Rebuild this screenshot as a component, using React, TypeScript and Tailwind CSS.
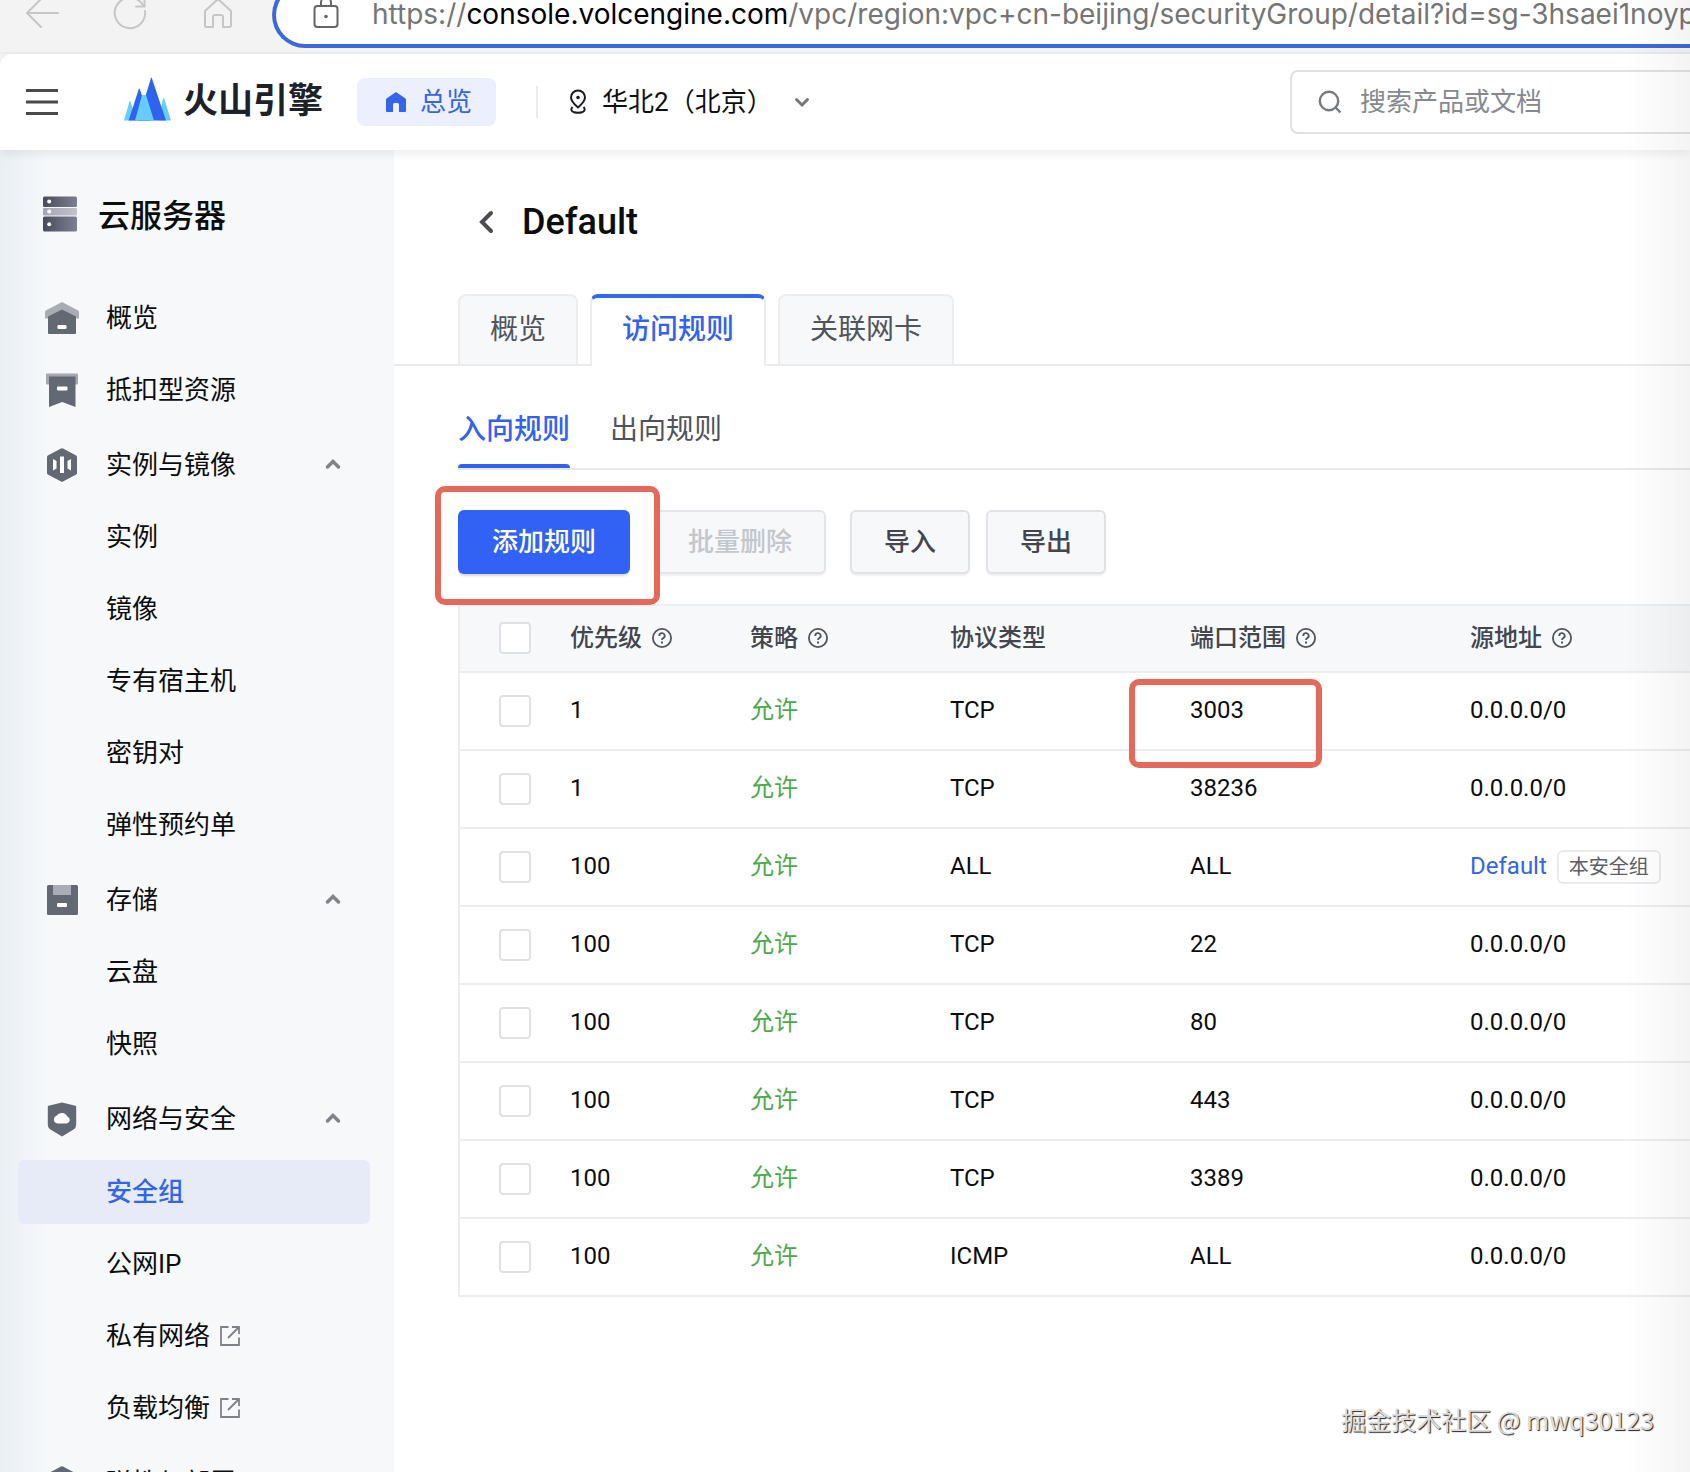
import React from "react";

const BackIcon = () => (
  <svg width="36" height="36" viewBox="0 0 36 36" fill="none" stroke="#c6c6c6" strokeWidth="2" strokeLinecap="round">
    <path d="M34 16H3M17 30L3 16L17 2" />
  </svg>
);

const ReloadIcon = () => (
  <svg width="36" height="36" viewBox="0 0 36 36" fill="none" stroke="#c6c6c6" strokeWidth="2" strokeLinecap="round">
    <path d="M33 14A15.2 15.2 0 1 1 29 5.500L32 9.500M32.500 1V9.500H24" />
  </svg>
);

const BrowserHomeIcon = () => (
  <svg width="36" height="36" viewBox="0 0 36 36" fill="none" stroke="#c6c6c6" strokeWidth="2" strokeLinejoin="round">
    <path d="M5 14L18 2L31 14V28.500A1.500 1.500 0 0 1 29.500 30H23V20A2 2 0 0 0 21 18H15A2 2 0 0 0 13 20V30H6.500A1.500 1.500 0 0 1 5 28.500Z" />
  </svg>
);

const LockIcon = () => (
  <svg width="28" height="36" viewBox="0 0 28 36" fill="none" stroke="#666" strokeWidth="2">
    <rect x="2.500" y="9" width="23" height="21" rx="3" />
    <path d="M9 9V5.500A5 5 0 0 1 19 5.500V9" />
    <circle cx="14" cy="19.500" r="1.800" fill="#666" stroke="none" />
  </svg>
);

const MenuIcon = () => (
  <svg width="32" height="28" viewBox="0 0 32 28" fill="none" stroke="#4a4a4a" strokeWidth="3">
    <path d="M0 2.500H32M0 14H32M0 25.500H32" />
  </svg>
);

const VolcanoLogo = () => (
  <svg width="47" height="50" viewBox="0 0 47 50">
    <path d="M0 43.500L5.500 24.500Q6 23.500 6.500 24.500L12 43.500Z" fill="#64cdfb" />
    <path d="M35 43.500L39 21.500Q39.600 20.500 40.200 21.500L47 43.500Z" fill="#64cdfb" />
    <path d="M4.600 43.500L14.800 12Q15.300 11 15.800 12L26 43.500Z" fill="#2f63ef" />
    <path d="M14 43.500L27 1Q27.400 0 27.800 1L42 43.500Z" fill="#2f63ef" />
    <path d="M11 43.500L18 18H22L30 43.500Z" fill="#64cdfb" />
  </svg>
);

const HomeSolidIcon = () => (
  <svg width="22" height="22" viewBox="0 0 22 22">
    <path d="M11 1L20.500 7.500Q21 8 21 9V20A1 1 0 0 1 20 21H14V13.500A1.500 1.500 0 0 0 12.500 12H9.500A1.500 1.500 0 0 0 8 13.500V21H2A1 1 0 0 1 1 20V9Q1 8 1.500 7.500Z" fill="#3564ec" />
  </svg>
);

const PinIcon = () => (
  <svg width="18" height="26" viewBox="0 0 18 26" fill="none" stroke="#1b1c20" strokeWidth="2">
    <path d="M9 18.500C5 15 2 12 2 8.500A7 7 0 0 1 16 8.500C16 12 13 15 9 18.500Z" />
    <circle cx="9" cy="8.500" r="1.800" fill="#1b1c20" stroke="none" />
    <path d="M3.500 18C1.500 20 2 22.500 5 23.300Q9 24.300 13 23.300C16 22.500 16.500 20 14.500 18" />
  </svg>
);

const ChevronDown = () => (
  <svg width="18" height="18" viewBox="0 0 18 18" fill="none" stroke="#73777c" strokeWidth="3" strokeLinecap="round">
    <path d="M3.500 6.500L9 12L14.500 6.500" />
  </svg>
);

const ChevronUp = () => (
  <svg width="20" height="20" viewBox="0 0 20 20" fill="none" stroke="#808388" strokeWidth="3.500" strokeLinecap="round">
    <path d="M4.500 12L10 6.500L15.500 12" />
  </svg>
);

const ChevronLeft = () => (
  <svg width="18" height="26" viewBox="0 0 18 26" fill="none" stroke="#4a4c50" strokeWidth="4" strokeLinecap="round">
    <path d="M14 4L5 13L14 22" />
  </svg>
);

const SearchIcon = () => (
  <svg width="24" height="24" viewBox="0 0 24 24" fill="none" stroke="#76797e" strokeWidth="2.400">
    <circle cx="11" cy="11" r="9.200" />
    <path d="M17.500 17.500L22.500 22.500" />
  </svg>
);

const HelpIcon = () => (
  <svg width="22" height="22" viewBox="0 0 22 22" fill="none" stroke="#50545b" strokeWidth="1.800">
    <circle cx="11" cy="11" r="9.100" />
    <path d="M8.300 9A2.700 2.700 0 1 1 12 11.300Q11 11.800 11 13" />
    <path d="M11 14.600V16.400" strokeWidth="2" />
  </svg>
);

const ExternalIcon = () => (
  <svg width="20" height="20" viewBox="0 0 20 20" fill="none" stroke="#7e8288" strokeWidth="1.800">
    <path d="M8.500 1H1V19H19V11.500M8 12L19 1M12 1H19V8" />
  </svg>
);

const ServerIcon = () => (
  <svg width="34" height="40" viewBox="0 0 34 40">
    <defs>
      <linearGradient id="serverDark" x1="0" x2="1" y1="0" y2="0">
        <stop offset="0" stopColor="#474c5b" />
        <stop offset="1" stopColor="#7d8090" />
      </linearGradient>
      <linearGradient id="serverLight" x1="0" x2="1" y1="0" y2="0">
        <stop offset="0" stopColor="#a3a7b3" />
        <stop offset="1" stopColor="#c0c3cc" />
      </linearGradient>
    </defs>
    <rect x="0" y="0.500" width="34" height="10.500" rx="1.500" fill="url(#serverDark)" />
    <rect x="0" y="12" width="34" height="7.500" rx="1" fill="url(#serverLight)" />
    <rect x="0" y="20.500" width="34" height="15" rx="1.500" fill="url(#serverDark)" />
    <circle cx="6.200" cy="5.500" r="2" fill="#fff" />
    <circle cx="6.200" cy="15.500" r="2" fill="#fff" />
    <circle cx="6.200" cy="28.200" r="2" fill="#fff" />
  </svg>
);

const OverviewIcon = () => (
  <svg width="36" height="36" viewBox="0 0 36 36">
    <path d="M18 2L34.200 10.500Q35 11 35 12V18.500H1V12Q1 11 1.800 10.500Z" fill="#a9adb3" />
    <path d="M4 16.500L18 9.500L32 16.500V33A1 1 0 0 1 31 34H5A1 1 0 0 1 4 33Z" fill="#636973" />
    <rect x="13.500" y="25" width="9" height="4" rx="1" fill="#fff" />
  </svg>
);

const BookmarkIcon = () => (
  <svg width="36" height="36" viewBox="0 0 36 36">
    <rect x="2" y="1.500" width="32" height="11" rx="1" fill="#a4a8ae" />
    <path d="M5 4.500H31.500V35L18.200 30L5 35Z" fill="#636973" />
    <rect x="13" y="14.500" width="10.500" height="4" rx="1" fill="#fff" />
  </svg>
);

const HexagonIcon = () => (
  <svg width="36" height="36" viewBox="0 0 36 36">
    <path d="M17 1.600Q18 1 19 1.600L32.200 8.500Q33 9 33 10V26Q33 27 32.200 27.500L19 34.500Q18 35 17 34.500L3.800 27.500Q3 27 3 26V10Q3 9 3.800 8.500Z" fill="#636973" />
    <path d="M16 9.500H20V26H16ZM9 12L12.500 14V21.500L9 23.500ZM27 12L23.500 14V21.500L27 23.500Z" fill="#fff" />
  </svg>
);

const DiskIcon = () => (
  <svg width="36" height="36" viewBox="0 0 36 36">
    <rect x="3" y="3" width="31" height="30" rx="1.500" fill="#636973" />
    <rect x="9" y="3" width="18" height="10" fill="#a9adb5" />
    <rect x="13" y="21" width="10" height="4" rx="1" fill="#fff" />
  </svg>
);

const ShieldIcon = () => (
  <svg width="36" height="36" viewBox="0 0 36 36">
    <path d="M18 1.500L31.500 4.800Q32.200 5 32.200 5.800V24Q32 27 29.500 28.500L18 35.500L6.500 28.500Q4 27 3.800 24V5.800Q3.800 5 4.500 4.800Z" fill="#636973" />
    <path d="M13.500 22.500A4 4 0 0 1 12.500 14.800A6.200 6.200 0 0 1 23.500 15.800A3.500 3.500 0 0 1 23 22.500Z" fill="#fff" />
  </svg>
);

type Entry = {
  label: string;
  icon?: React.ReactNode;
  group?: boolean;
  active?: boolean;
  external?: boolean;
};

const entries: Entry[] = [
  { label: "概览", icon: <OverviewIcon /> },
  { label: "抵扣型资源", icon: <BookmarkIcon /> },
  { label: "实例与镜像", icon: <HexagonIcon />, group: true },
  { label: "实例" },
  { label: "镜像" },
  { label: "专有宿主机" },
  { label: "密钥对" },
  { label: "弹性预约单" },
  { label: "存储", icon: <DiskIcon />, group: true },
  { label: "云盘" },
  { label: "快照" },
  { label: "网络与安全", icon: <ShieldIcon />, group: true },
  { label: "安全组", active: true },
  { label: "公网IP" },
  { label: "私有网络", external: true },
  { label: "负载均衡", external: true },
  { label: "弹性与部署", icon: <HexagonIcon />, group: true },
];

function NavEntry({ entry }: { entry: Entry }) {
  if (entry.group) {
    return (
      <button type="button" aria-expanded="true" className="mt-[3px] mb-2 flex h-16 w-full shrink-0 items-center gap-[26px] pr-[27px] pl-[26px] text-left">
        {entry.icon}
        <span className="flex-1">{entry.label}</span>
        <ChevronUp />
      </button>
    );
  }
  if (entry.icon) {
    return (
      <a href="#" className="mb-2 flex h-16 shrink-0 items-center gap-[26px] pl-[26px]">
        {entry.icon}
        {entry.label}
      </a>
    );
  }
  return (
    <a
      href="#"
      className={
        entry.active
          ? "mt-px mb-2 flex h-16 shrink-0 items-center rounded-md bg-[#e7ebf7] pl-[88px] font-medium text-[#3564ec]"
          : "mb-2 flex h-16 shrink-0 items-center gap-[10px] pl-[88px]"
      }
    >
      {entry.label}
      {entry.external && <ExternalIcon />}
    </a>
  );
}

function Checkbox({ label }: { label: string }) {
  return (
    <input
      type="checkbox"
      aria-label={label}
      className="block size-8 appearance-none rounded-sm border-2 border-[#dfe1e5] bg-white checked:bg-[#3162f5]"
    />
  );
}

const columns = [
  { label: "优先级", help: true },
  { label: "策略", help: true },
  { label: "协议类型", help: false },
  { label: "端口范围", help: true },
  { label: "源地址", help: true },
];

const rules = [
  { priority: "1", protocol: "TCP", port: "3003", source: "0.0.0.0/0", marked: true },
  { priority: "1", protocol: "TCP", port: "38236", source: "0.0.0.0/0" },
  { priority: "100", protocol: "ALL", port: "ALL", source: "Default", own: true },
  { priority: "100", protocol: "TCP", port: "22", source: "0.0.0.0/0" },
  { priority: "100", protocol: "TCP", port: "80", source: "0.0.0.0/0" },
  { priority: "100", protocol: "TCP", port: "443", source: "0.0.0.0/0" },
  { priority: "100", protocol: "TCP", port: "3389", source: "0.0.0.0/0" },
  { priority: "100", protocol: "ICMP", port: "ALL", source: "0.0.0.0/0" },
];

function BrowserBar() {
  return (
    <div className="flex h-[54px] shrink-0 items-end overflow-hidden border-b-2 border-[#ececec] bg-[#f3f3f3] pb-1">
      <div className="flex h-[66px] w-[272px] shrink-0 items-center gap-[52px] pl-6">
        <button type="button" aria-label="后退"><BackIcon /></button>
        <button type="button" aria-label="刷新"><ReloadIcon /></button>
        <button type="button" aria-label="主页"><BrowserHomeIcon /></button>
      </div>
      <div className="flex h-[66px] min-w-0 flex-1 items-center gap-8 overflow-hidden rounded-l-full border-4 border-r-0 border-[#3b69dd] bg-white pl-9">
        <span className="shrink-0"><LockIcon /></span>
        <span className="pb-0.5 font-['Inter','Noto_Sans_CJK_SC',sans-serif] text-[28px] whitespace-nowrap text-[#757575]">
          https://<span className="text-black">console.volcengine.com</span>
          /vpc/region:vpc+cn-beijing/securityGroup/detail?id=sg-3hsaei1noypk
        </span>
      </div>
    </div>
  );
}

function TopBar() {
  return (
    <div className="shrink-0 bg-[#f3f3f3]">
      <header className="relative z-10 flex h-24 items-center rounded-tl-xl bg-white pl-[26px] shadow-[0_4px_10px_rgba(0,0,0,0.07)]">
        <button type="button" aria-label="菜单" className="mr-[66px]"><MenuIcon /></button>
        <a href="#" className="mr-[34px] flex items-center gap-3">
          <VolcanoLogo />
          <span className="pb-0.5 text-[35px] leading-none font-bold text-[#1d2129]">火山引擎</span>
        </a>
        <a href="#" className="mr-10 flex h-12 items-center gap-[13px] rounded-lg bg-[#eceffd] px-7 pr-6 text-[26px] text-[#3564ec]">
          <HomeSolidIcon />
          总览
        </a>
        <span className="mr-[31px] h-8 w-0.5 bg-[#ebebeb]" />
        <button type="button" className="flex items-center text-[26px] text-[#0e0f12]">
          <PinIcon />
          <span className="mr-5 ml-[15px]">华北2（北京）</span>
          <ChevronDown />
        </button>
        <label className="ml-auto flex h-16 w-[400px] items-center gap-[18px] rounded-l-lg border-2 border-r-0 border-[#e0e1e2] pl-[26px]">
          <SearchIcon />
          <input
            type="text"
            aria-label="搜索"
            placeholder="搜索产品或文档"
            className="min-w-0 flex-1 bg-transparent text-[26px] outline-none placeholder:text-[#86898e]"
          />
        </label>
      </header>
    </div>
  );
}

function Sidebar() {
  return (
    <aside className="flex w-[394px] shrink-0 flex-col overflow-hidden bg-[#f6f8fa] bg-[linear-gradient(to_right,#eaeff4,#f6f8fa_48px)] pt-[42px] pr-6 pl-[18px] text-[26px] text-[#0c0d0e]">
      <div className="mb-[46px] flex h-12 shrink-0 items-center gap-[21px] pl-[25px] text-[32px] font-medium">
        <ServerIcon />
        云服务器
      </div>
      <nav className="flex flex-col">
        {entries.map((entry) => (
          <NavEntry key={entry.label} entry={entry} />
        ))}
      </nav>
    </aside>
  );
}

function RuleTable() {
  return (
    <div className="mt-[30px] border-t-2 border-l-2 border-[#ebedef]">
      <table className="w-full table-fixed border-separate border-spacing-0 text-left text-2xl text-[#0c0d0e]">
        <colgroup>
          <col className="w-[94px]" />
          <col className="w-[180px]" />
          <col className="w-[200px]" />
          <col className="w-[240px]" />
          <col className="w-[280px]" />
          <col />
        </colgroup>
        <thead>
          <tr className="h-[67px] bg-[#f6f8fa]">
            <th className="border-b-2 border-[#ebedef] pb-0.5 pl-[39px]"><Checkbox label="全选" /></th>
            {columns.map((column) => (
              <th key={column.label} scope="col" className="border-b-2 border-[#ebedef] pb-0.5 pl-4 font-medium text-[#42464e]">
                <span className="flex items-center gap-[9px]">
                  {column.label}
                  {column.help && <HelpIcon />}
                </span>
              </th>
            ))}
          </tr>
        </thead>
        <tbody>
          {rules.map((rule, index) => (
            <tr key={index} className="h-[78px]">
              <td className="border-b-2 border-[#ebedef] pl-[39px]"><Checkbox label={`规则 ${index + 1}`} /></td>
              <td className="border-b-2 border-[#ebedef] pb-0.5 pl-4">{rule.priority}</td>
              <td className="border-b-2 border-[#ebedef] pb-0.5 pl-4 text-[#4caa48]">允许</td>
              <td className="border-b-2 border-[#ebedef] pb-0.5 pl-4">{rule.protocol}</td>
              <td className="relative border-b-2 border-[#ebedef] pb-0.5 pl-4">
                {rule.port}
                {rule.marked && (
                  <span className="pointer-events-none absolute top-1.5 -left-[45px] h-[89px] w-[193px] rounded-[10px] border-[6px] border-[#e6685a]" />
                )}
              </td>
              <td className="border-b-2 border-[#ebedef] pb-0.5 pl-4">
                {rule.own ? (
                  <span className="flex items-center gap-2.5">
                    <a href="#" className="text-[#3564ec]">{rule.source}</a>
                    <span className="mt-0.5 flex h-[34px] items-center rounded-md border-2 border-[#e8eaed] px-2.5 text-xl text-[#5a5e66]">本安全组</span>
                  </span>
                ) : (
                  rule.source
                )}
              </td>
            </tr>
          ))}
        </tbody>
      </table>
    </div>
  );
}

function Toolbar() {
  return (
    <div className="mt-10 flex text-[26px] font-medium">
      <span className="relative mr-6">
        <button type="button" className="h-16 rounded-md bg-[#3162f5] px-[34px] text-white shadow-[0_2px_2px_rgba(0,0,0,0.15)]">
          添加规则
        </button>
        <span className="pointer-events-none absolute -top-6 -right-[30px] -bottom-[31px] -left-[23px] z-10 rounded-[10px] border-[6px] border-[#e6685a]" />
      </span>
      <button type="button" disabled className="mr-6 h-16 rounded-md border-2 border-[#e3e5e8] bg-[#f6f8fa] px-8 text-[#c3c6cc] shadow-[0_2px_2px_rgba(0,0,0,0.06)]">
        批量删除
      </button>
      <button type="button" className="mr-4 h-16 rounded-md border-2 border-[#e0e2e5] bg-[#f6f8fa] px-8 text-[#42464e] shadow-[0_2px_2px_rgba(0,0,0,0.06)]">
        导入
      </button>
      <button type="button" className="h-16 rounded-md border-2 border-[#e0e2e5] bg-[#f6f8fa] px-8 text-[#42464e] shadow-[0_2px_2px_rgba(0,0,0,0.06)]">
        导出
      </button>
    </div>
  );
}

export default function App() {
  return (
    <div className="relative flex h-screen flex-col overflow-hidden bg-white font-['Roboto','Noto_Sans_CJK_SC',sans-serif]">
      <BrowserBar />
      <TopBar />
      <div className="flex min-h-0 flex-1">
        <Sidebar />
        <main className="min-w-0 flex-1 overflow-hidden pt-12">
          <div className="mb-12 flex h-12 items-center gap-[27px] pl-[83px]">
            <button type="button" aria-label="返回"><ChevronLeft /></button>
            <h1 className="text-4xl font-medium text-[#0c0d0e]">Default</h1>
          </div>
          <div role="tablist" className="flex h-[72px] gap-3 pl-16 text-[28px] text-[#50545b] shadow-[inset_0_-2px_0_#e9ebed]">
            <button type="button" role="tab" aria-selected="false" className="rounded-t-lg border-2 border-[#ebedef] bg-[#f6f8fa] px-[30px]">概览</button>
            <button type="button" role="tab" aria-selected="true" className="rounded-t-lg border-x-2 border-t-4 border-x-[#ebedef] border-t-[#2f6bf0] bg-white px-[30px] pb-1 font-medium text-[#3162f5]">访问规则</button>
            <button type="button" role="tab" aria-selected="false" className="rounded-t-lg border-2 border-[#ebedef] bg-[#f6f8fa] px-[30px]">关联网卡</button>
          </div>
          <div className="pl-16">
            <div role="tablist" className="flex gap-10 border-b-2 border-[#e6e8ea] pt-10 text-[28px] leading-[48px] text-[#50545b]">
              <button type="button" role="tab" aria-selected="true" className="flex flex-col gap-2.5 font-medium text-[#3162f5]">
                入向规则
                <span className="h-1 w-full rounded-t-sm bg-[#3162f5]" />
              </button>
              <button type="button" role="tab" aria-selected="false" className="flex flex-col">出向规则</button>
            </div>
            <Toolbar />
            <RuleTable />
          </div>
        </main>
      </div>
      <div className="pointer-events-none absolute inset-y-0 right-0 z-20 w-16 bg-[linear-gradient(to_right,transparent,rgba(0,0,0,0.045))]" />
      <div className="pointer-events-none absolute right-9 bottom-[34px] font-['Noto_Sans_CJK_SC',sans-serif] text-[25px] text-[#dcdcdc] [text-shadow:1px_1px_1px_#222]">
        掘金技术社区 @ mwq30123
      </div>
    </div>
  );
}
